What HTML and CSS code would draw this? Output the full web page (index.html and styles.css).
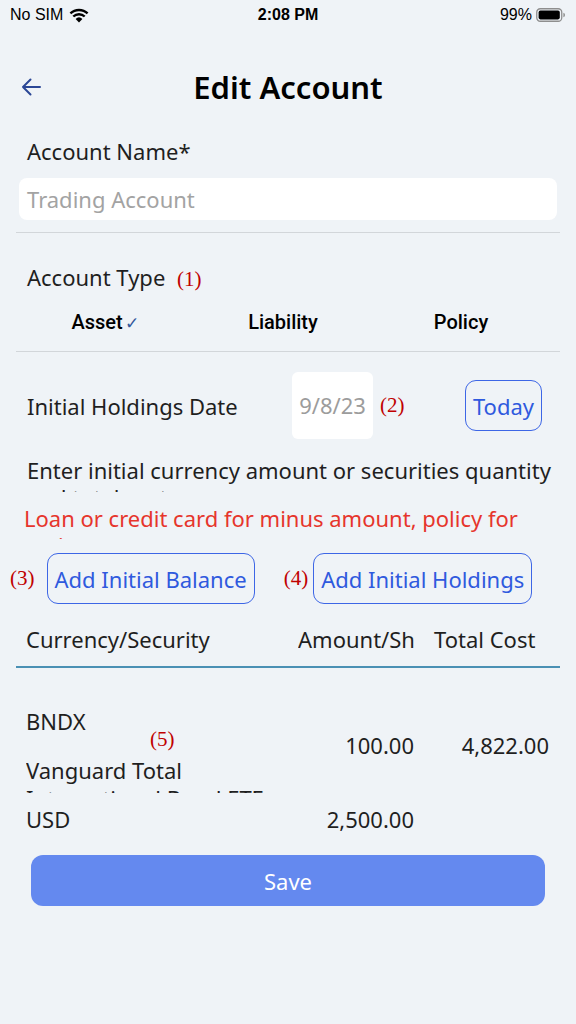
FILE: index.html
```html
<!DOCTYPE html>
<html lang="en">
<head>
    <meta charset="UTF-8">
    <meta name="viewport" content="width=device-width, initial-scale=1.0">
    <title>Edit Account</title>
    <link rel="stylesheet" href="styles.css">
</head>
<body>
    <div class="status-bar">
        <div class="status-left">
            No SIM
            <svg class="wifi" width="20" height="15" viewBox="0 0 20 15">
                <path d="M10 14.5 L6.6 10.9 A5 5 0 0 1 13.4 10.9 Z" fill="#000"/>
                <path d="M4.3 8.5 A8.2 8.2 0 0 1 15.7 8.5" stroke="#000" stroke-width="2.4" fill="none"/>
                <path d="M1.4 5.4 A12.4 12.4 0 0 1 18.6 5.4" stroke="#000" stroke-width="2.4" fill="none"/>
            </svg>
        </div>
        <div class="status-time">2:08 PM</div>
        <div class="status-right">
            99%
            <svg class="battery" width="30" height="14" viewBox="0 0 30 14">
                <rect x="0.75" y="0.75" width="25" height="12.5" rx="3.5" fill="none" stroke="#8e8e8e" stroke-width="1.3"/>
                <rect x="2.6" y="2.6" width="21.2" height="8.8" rx="1.8" fill="#000"/>
                <path d="M27.4 4.8 Q29 5.2 29 7 Q29 8.8 27.4 9.2 Z" fill="#8e8e8e"/>
            </svg>
        </div>
    </div>

    <div class="nav">
        <svg class="back" width="20" height="18" viewBox="0 0 20 18">
            <path d="M19 9 H2 M9.5 1.5 L2 9 L9.5 16.5" stroke="#2b4796" stroke-width="2" fill="none" stroke-linecap="round" stroke-linejoin="round"/>
        </svg>
        <h1>Edit Account</h1>
    </div>

    <div class="form">
        <div class="label">Account Name*</div>
        <div class="text-input">Trading Account</div>
        <div class="divider"></div>

        <div class="label type-label">Account Type <span class="mark">(1)</span></div>
        <div class="segments">
            <div class="segment">Asset<span class="check">✓</span></div>
            <div class="segment">Liability</div>
            <div class="segment">Policy</div>
        </div>
        <div class="divider segment-divider"></div>

        <div class="date-row">
            <div class="label date-label">Initial Holdings Date</div>
            <div class="date-box">9/8/23</div>
            <span class="mark date-mark">(2)</span>
            <button class="outline-btn today-btn">Today</button>
        </div>

        <div class="note">Enter initial currency amount or securities quantity and total cost.</div>
        <div class="warning">Loan or credit card for minus amount, policy for savings.</div>

        <div class="add-row">
            <span class="mark">(3)</span>
            <button class="outline-btn">Add Initial Balance</button>
            <span class="mark mark-four">(4)</span>
            <button class="outline-btn">Add Initial Holdings</button>
        </div>

        <div class="table-head">
            <div class="col-name">Currency/Security</div>
            <div class="col-amount">Amount/Shares</div>
            <div class="col-cost">Total Cost</div>
        </div>

        <div class="table-row security-row">
            <div class="col-name">
                <div>BNDX</div>
                <div class="sec-name">Vanguard Total International Bond ETF</div>
                <span class="mark row-mark">(5)</span>
            </div>
            <div class="col-amount num">100.00</div>
            <div class="col-cost num">4,822.00</div>
        </div>

        <div class="table-row cash-row">
            <div class="col-name">USD</div>
            <div class="col-amount num">2,500.00</div>
            <div class="col-cost num"></div>
        </div>

        <button class="save-btn">Save</button>
    </div>
</body>
</html>
```

FILE: styles.css
```css
body {
    margin: 0;
    background-color: #eff3f7;
    font-family: "Noto Sans", sans-serif;
    color: #1f1f1f;
}
.status-bar {
    height: 30px;
    display: flex;
    align-items: center;
    justify-content: space-between;
    padding: 0 10px;
    font-family: "Liberation Sans", Arial, sans-serif;
    font-size: 16px;
    color: #000;
}
.status-left, .status-right {
    width: 130px;
    display: flex;
    align-items: center;
    gap: 6px;
}
.status-right {
    justify-content: flex-end;
    gap: 4px;
}
.status-time {
    font-weight: bold;
}
.nav {
    margin-top: 35px;
    height: 44px;
    display: flex;
    align-items: center;
    justify-content: center;
    position: relative;
}
.back {
    position: absolute;
    left: 21px;
    top: 13px;
}
.nav h1 {
    margin: 0;
    font-size: 31px;
    font-weight: 600;
    color: #000;
}
.form {
    padding: 0 16px;
}
.label {
    font-size: 22px;
    line-height: 28px;
    height: 28px;
    padding-left: 11px;
}
.form > .label:first-child {
    margin-top: 28px;
}
.text-input {
    margin: 13px 3px 0;
    height: 42px;
    line-height: 42px;
    background: #fff;
    border-radius: 8px;
    padding-left: 8px;
    font-size: 22px;
    color: #a3a3a3;
}
.divider {
    height: 1px;
    background: #d2d6da;
    margin-top: 12px;
}
.type-label {
    margin-top: 30px;
}
.mark {
    font-family: "Liberation Serif", serif;
    font-size: 21px;
    line-height: 1;
    color: #c00000;
}
.type-label .mark {
    margin-left: 6px;
}
.segments {
    display: grid;
    grid-template-columns: 1fr 1fr 1fr;
    height: 44px;
    align-items: center;
    margin-top: 9px;
    padding-right: 10px;
    font-family: "Roboto", "Liberation Sans", sans-serif;
    font-size: 20px;
    font-weight: 500;
    color: #000;
    text-align: center;
}
.check {
    color: #33589c;
    font-size: 17px;
    margin-left: 2px;
}
.segment-divider {
    margin-top: 7px;
}
.date-row {
    display: flex;
    align-items: center;
    margin-top: 20px;
}
.date-label {
    width: 265px;
}
.date-box {
    width: 81px;
    height: 67px;
    line-height: 67px;
    background: #fff;
    border-radius: 6px;
    text-align: center;
    font-size: 22px;
    color: #9c9c9c;
}
.date-mark {
    margin-left: 7px;
}
.outline-btn {
    height: 51px;
    padding: 0 7px;
    background: transparent;
    border: 1px solid #3d66e6;
    border-radius: 11px;
    font-family: "Noto Sans", sans-serif;
    font-size: 22px;
    color: #2f5ade;
}
.today-btn {
    margin-left: auto;
    margin-right: 18px;
}
.note, .warning {
    font-size: 22px;
    line-height: 27px;
    overflow: hidden;
}
.note {
    margin-top: 18px;
    padding-left: 11px;
    height: 35px;
}
.warning {
    margin-top: 13px;
    padding-left: 8px;
    height: 34px;
    color: #e6352c;
}
.add-row {
    display: flex;
    align-items: center;
    margin: 14px 0 0 -6px;
}
.add-row .outline-btn {
    margin-left: 12px;
    height: 51px;
}
.mark-four {
    margin-left: 29px;
}
.add-row .mark-four + .outline-btn {
    margin-left: 5px;
}
.table-head, .table-row {
    display: flex;
    font-size: 22px;
    line-height: 28px;
}
.table-head {
    padding: 21px 0 13px;
    border-bottom: 2px solid #4a90b4;
}
.col-name {
    width: 272px;
    padding-left: 10px;
    position: relative;
}
.col-amount {
    width: 116px;
    white-space: nowrap;
    overflow: hidden;
}
.col-cost {
    width: 115px;
    margin-left: 20px;
    padding-right: 11px;
}
.num {
    text-align: right;
    align-self: center;
}
.security-row {
    padding-top: 39px;
}
.security-row .num {
    margin-bottom: 10px;
}
.sec-name {
    margin-top: 21px;
    height: 37px;
    overflow: hidden;
}
.row-mark {
    position: absolute;
    left: 134px;
    top: 22px;
}
.cash-row {
    padding-top: 12px;
}
.save-btn {
    display: block;
    margin: 22px 15px 0;
    width: 514px;
    height: 51px;
    border: none;
    border-radius: 12px;
    background: #6489ef;
    color: #fff;
    font-family: "Noto Sans", sans-serif;
    font-size: 22px;
}
```
